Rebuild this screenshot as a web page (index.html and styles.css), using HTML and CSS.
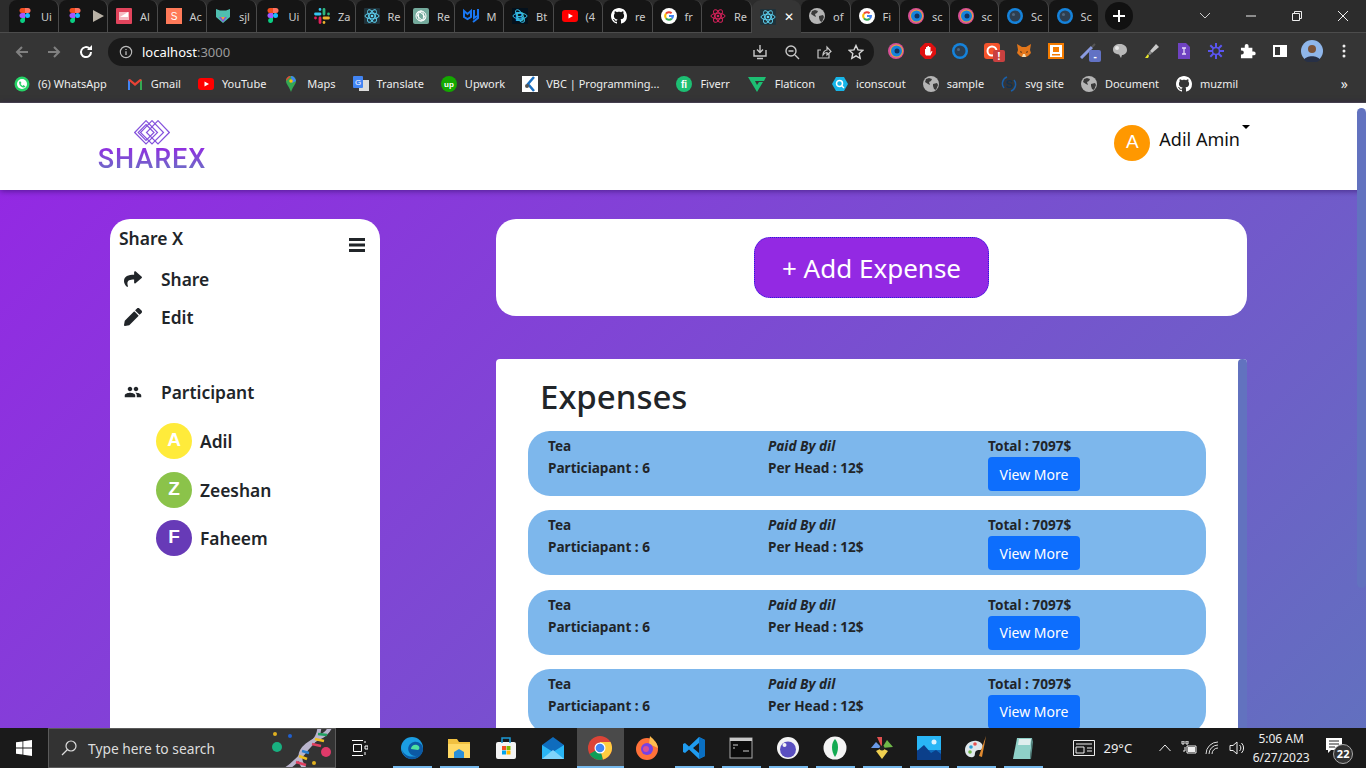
FILE: index.html
```html
<!DOCTYPE html>
<html>
<head>
  <title>Share X</title>
  <link rel="stylesheet" href="styles.css">
</head>
<body>
  <!-- shared icons -->
  <svg class="defs">
    <symbol id="figma" viewBox="0 0 16 16"><path fill="#f24e1e" d="M5 0h3v5H5a2.5 2.5 0 0 1 0-5z"/><path fill="#ff7262" d="M8 0h3a2.5 2.5 0 0 1 0 5H8z"/><path fill="#a259ff" d="M5 5h3v5H5a2.5 2.5 0 0 1 0-5z"/><circle fill="#1abcfe" cx="10.5" cy="7.5" r="2.5"/><path fill="#0acf83" d="M5 10h3v3a2.5 2.5 0 1 1-3-3z"/></symbol>
    <symbol id="react" viewBox="0 0 16 16"><rect width="16" height="16" rx="1" fill="#20323a"/><g fill="none" stroke="#61dafb" stroke-width=".9"><ellipse cx="8" cy="8" rx="7" ry="2.8"/><ellipse cx="8" cy="8" rx="7" ry="2.8" transform="rotate(60 8 8)"/><ellipse cx="8" cy="8" rx="7" ry="2.8" transform="rotate(120 8 8)"/></g><circle cx="8" cy="8" r="1.3" fill="#61dafb"/></symbol>
    <symbol id="reactred" viewBox="0 0 16 16"><g fill="none" stroke="#d6215b" stroke-width="1"><ellipse cx="8" cy="8" rx="7" ry="2.8"/><ellipse cx="8" cy="8" rx="7" ry="2.8" transform="rotate(60 8 8)"/><ellipse cx="8" cy="8" rx="7" ry="2.8" transform="rotate(120 8 8)"/></g><circle cx="8" cy="8" r="1.3" fill="#d6215b"/></symbol>
    <symbol id="google" viewBox="0 0 16 16"><circle cx="8" cy="8" r="8" fill="#fff"/><path d="M5 5.7A3.8 3.8 0 0 1 10.6 5.2" fill="none" stroke="#ea4335" stroke-width="2"/><path d="M5 10.3A3.8 3.8 0 0 1 5 5.7" fill="none" stroke="#fbbc05" stroke-width="2"/><path d="M10.8 10.5A3.8 3.8 0 0 1 5 10.3" fill="none" stroke="#34a853" stroke-width="2"/><path d="M8 8h4a3.8 3.8 0 0 1-1.200 2.500" fill="none" stroke="#4285f4" stroke-width="2"/></symbol>
    <symbol id="github" viewBox="0 0 16 16"><path fill="#fff" d="M8 0C3.58 0 0 3.58 0 8c0 3.54 2.29 6.53 5.47 7.59.4.07.55-.17.55-.38 0-.19-.01-.82-.01-1.49-2.01.37-2.53-.49-2.69-.94-.09-.23-.48-.94-.82-1.13-.28-.15-.68-.52-.01-.53.63-.01 1.08.58 1.23.82.72 1.21 1.87.87 2.33.66.07-.52.28-.87.51-1.07-1.78-.2-3.64-.89-3.64-3.95 0-.87.31-1.59.82-2.15-.08-.2-.36-1.02.08-2.12 0 0 .67-.21 2.2.82.64-.18 1.32-.27 2-.27s1.36.09 2 .27c1.53-1.04 2.2-.82 2.2-.82.44 1.1.16 1.92.08 2.12.51.56.82 1.27.82 2.15 0 3.07-1.87 3.75-3.65 3.95.29.25.54.73.54 1.48 0 1.07-.01 1.93-.01 2.2 0 .21.15.46.55.38A8.013 8.013 0 0 0 16 8c0-4.42-3.58-8-8-8z"/></symbol>
    <symbol id="youtube" viewBox="0 0 16 16"><rect y="2" width="16" height="12" rx="3" fill="#f00"/><path d="M6.5 5.5v5L11 8z" fill="#fff"/></symbol>
    <symbol id="globe" viewBox="0 0 16 16"><circle cx="8" cy="8" r="8" fill="#b5b5b5"/><path fill="#3a3a3a" d="M3 3l3-1 3 1-1 2-2 1 1 3-2-1-3-2zM10 8l4-1 1 2-2 5-2-1-1-3z"/></symbol>
    <symbol id="fox" viewBox="0 0 16 16"><circle cx="8" cy="8" r="8" fill="#d84f96"/><circle cx="8.5" cy="8" r="6.5" fill="#f2a33a"/><circle cx="8.5" cy="8" r="5.5" fill="#1583dc"/><circle cx="9" cy="8" r="2.5" fill="#12325e"/></symbol>
    <symbol id="scout" viewBox="0 0 16 16"><circle cx="8" cy="8" r="8" fill="#1583dc"/><circle cx="8" cy="8" r="5.5" fill="#2d3e50"/><circle cx="6.5" cy="6.5" r="1.5" fill="#50677d"/></symbol>
    <symbol id="shield" viewBox="0 0 16 16"><path fill="#4fbfb0" d="M1 1l4 1.5h6L15 1v8l-7 6-7-6z"/><path fill="#8a4fd8" d="M4 9h8l-4 5z"/><path fill="#e9a93a" d="M6 9h4l-2 3z"/></symbol>
    <symbol id="slack" viewBox="0 0 16 16"><g fill="none" stroke-width="2.8" stroke-linecap="round"><path stroke="#36c5f0" d="M6 1.500v0M1.500 6H6"/><path stroke="#2eb67d" d="M14.500 6v0M10 1.500V6"/><path stroke="#ecb22e" d="M10 14.500v0M10 10h4.500"/><path stroke="#e01e5a" d="M1.500 10v0M6 10v4.500"/></g></symbol>
    <symbol id="gpt" viewBox="0 0 16 16"><rect width="16" height="16" rx="2" fill="#74aa9c"/><g fill="none" stroke="#fff" stroke-width="1"><circle cx="8" cy="8" r="5"/><ellipse cx="8" cy="8" rx="2.5" ry="5"/><ellipse cx="8" cy="8" rx="5" ry="2.5" transform="rotate(45 8 8)"/></g></symbol>
    <symbol id="mui" viewBox="0 0 16 16"><path fill="none" stroke="#1976f0" stroke-width="2" d="M1 3v6l3.500 2L8 9V3L4.500 6zM11 2v8l3-2M15 1v9l-5 4"/></symbol>
    <symbol id="bs" viewBox="0 0 16 16"><rect width="16" height="16" fill="#04111c"/><g fill="none" stroke="#35b8e0"><ellipse cx="8" cy="8" rx="7" ry="2.8"/><ellipse cx="8" cy="8" rx="7" ry="2.8" transform="rotate(60 8 8)"/></g><text x="8" y="13" font-size="13" font-weight="700" text-anchor="middle" fill="#35b8e0" font-family="Liberation Sans">B</text></symbol>
  </svg>

  <div class="browser">
    <div class="tabstrip">
      <div class="tab"><svg class="fav"><use href="#figma"/></svg><span class="tab-name">Ui</span></div>
      <div class="tab"><svg class="fav"><use href="#figma"/></svg><svg class="fav" viewBox="0 0 16 16"><path d="M2 2v12l11-6z" fill="#b9b2a6"/></svg></div>
      <div class="tab"><svg class="fav" viewBox="0 0 16 16"><rect width="16" height="16" rx="1" fill="#e2445c"/><path d="M3 4h10v8H3z" fill="#f6b9c2"/><path d="M4 9l8-5v5z" fill="#fff"/></svg><span class="tab-name">Al</span></div>
      <div class="tab"><svg class="fav" viewBox="0 0 16 16"><rect width="16" height="16" fill="#ff7a59"/><text x="8" y="12" font-size="10" text-anchor="middle" fill="#fff" font-family="Liberation Sans">S</text></svg><span class="tab-name">Ac</span></div>
      <div class="tab"><svg class="fav"><use href="#shield"/></svg><span class="tab-name">sjl</span></div>
      <div class="tab"><svg class="fav"><use href="#figma"/></svg><span class="tab-name">Ui</span></div>
      <div class="tab"><svg class="fav"><use href="#slack"/></svg><span class="tab-name">Za</span></div>
      <div class="tab"><svg class="fav"><use href="#react"/></svg><span class="tab-name">Re</span></div>
      <div class="tab"><svg class="fav"><use href="#gpt"/></svg><span class="tab-name">Re</span></div>
      <div class="tab"><svg class="fav"><use href="#mui"/></svg><span class="tab-name">M</span></div>
      <div class="tab"><svg class="fav"><use href="#bs"/></svg><span class="tab-name">Bt</span></div>
      <div class="tab"><svg class="fav"><use href="#youtube"/></svg><span class="tab-name">(4</span></div>
      <div class="tab"><svg class="fav"><use href="#github"/></svg><span class="tab-name">re</span></div>
      <div class="tab"><svg class="fav"><use href="#google"/></svg><span class="tab-name">fr</span></div>
      <div class="tab"><svg class="fav"><use href="#reactred"/></svg><span class="tab-name">Re</span></div>
      <div class="tab tab-active"><svg class="fav"><use href="#react"/></svg><span class="tab-close">✕</span></div>
      <div class="tab"><svg class="fav"><use href="#globe"/></svg><span class="tab-name">of</span></div>
      <div class="tab"><svg class="fav"><use href="#google"/></svg><span class="tab-name">Fi</span></div>
      <div class="tab"><svg class="fav"><use href="#fox"/></svg><span class="tab-name">sc</span></div>
      <div class="tab"><svg class="fav"><use href="#fox"/></svg><span class="tab-name">sc</span></div>
      <div class="tab"><svg class="fav"><use href="#scout"/></svg><span class="tab-name">Sc</span></div>
      <div class="tab"><svg class="fav"><use href="#scout"/></svg><span class="tab-name">Sc</span></div>
      <div class="newtab">
        <svg width="14" height="14" viewBox="0 0 14 14"><path d="M7 1v12M1 7h12" stroke="#fff" stroke-width="2"/></svg>
      </div>
      <div class="winctl">
        <svg width="46" height="16" viewBox="0 0 46 16"><path d="M18 5l5 5 5-5" fill="none" stroke="#ccc"/></svg>
        <svg width="46" height="16" viewBox="0 0 46 16"><path d="M18 8h10" stroke="#eee"/></svg>
        <svg width="46" height="16" viewBox="0 0 46 16"><path d="M18.5 5.500h7v7h-7zM20.500 5V3.500h7v7H26" fill="none" stroke="#eee"/></svg>
        <svg width="46" height="16" viewBox="0 0 46 16"><path d="M18 3l10 10M28 3L18 13" stroke="#eee"/></svg>
      </div>
    </div>

    <div class="toolbar">
      <svg class="navbtn" viewBox="0 0 16 16"><path d="M14 8H3M8 3L3 8l5 5" fill="none" stroke="#808080" stroke-width="2"/></svg>
      <svg class="navbtn" viewBox="0 0 16 16"><path d="M2 8h11M8 3l5 5-5 5" fill="none" stroke="#808080" stroke-width="2"/></svg>
      <svg class="navbtn" viewBox="0 0 16 16"><path d="M13 8a5 5 0 1 1-1.500-3.500" fill="none" stroke="#fff" stroke-width="2"/><path d="M14 1v5H9z" fill="#fff"/></svg>
      <div class="omnibox">
        <svg class="omni-info" viewBox="0 0 16 16"><circle cx="8" cy="8" r="6.5" fill="none" stroke="#bbb" stroke-width="1.3"/><path d="M8 7v4.500M8 4.500v1.300" stroke="#bbb" stroke-width="1.5"/></svg>
        <span class="url">localhost<span class="url-port">:3000</span></span>
        <div class="omni-tools">
          <svg class="omni-ico" viewBox="0 0 16 16"><path d="M8 1v7M5 5.500L8 8.500l3-3M2 6v6h12V6M5 14.500h6" fill="none" stroke="#c8c8c8" stroke-width="1.4"/></svg>
          <svg class="omni-ico" viewBox="0 0 16 16"><circle cx="7" cy="7" r="5" fill="none" stroke="#c8c8c8" stroke-width="1.4"/><path d="M4.500 7h5M11 11l4 4" stroke="#c8c8c8" stroke-width="1.4"/></svg>
          <svg class="omni-ico" viewBox="0 0 16 16"><path d="M13 9v5H2V6h3M7 11c0-3 2-5 4-5V3l4 4.500L11 11V8.500c-2 0-3 1-4 2.500z" fill="none" stroke="#c8c8c8" stroke-width="1.2"/></svg>
          <svg class="omni-ico" viewBox="0 0 16 16"><path d="M8 1.500l2 4.400 4.800.5-3.600 3.200 1 4.700L8 11.900l-4.200 2.400 1-4.700L1.200 6.400 6 5.900z" fill="none" stroke="#d8d8d8" stroke-width="1.4"/></svg>
        </div>
      </div>
      <div class="extensions">
        <svg class="ext" viewBox="0 0 16 16"><use href="#fox"/></svg>
        <svg class="ext" viewBox="0 0 16 16"><path d="M5 0h6l5 5v6l-5 5H5l-5-5V5z" fill="#e01010"/><path d="M5 11V6h1v2-4h1.500v4-5H9v5-4h1.500v6l1-2 1 .5-2 4H6z" fill="#fff"/></svg>
        <svg class="ext" viewBox="0 0 16 16"><use href="#scout"/></svg>
        <div class="ext-wrap">
          <svg class="ext" viewBox="0 0 16 16"><rect width="16" height="16" rx="3" fill="#f4532c"/><circle cx="8" cy="8" r="4.5" fill="none" stroke="#fff" stroke-width="2"/></svg>
          <span class="ext-badge ext-badge-red">!</span>
        </div>
        <svg class="ext" viewBox="0 0 16 16"><path d="M1 1l5 3h4l5-3-1 6 1 3-3 3-2 1H6l-2-1-3-3 1-3z" fill="#e2761b"/><path d="M6 14l1-3h2l1 3z" fill="#f5deb3"/><path d="M4 8l2 1-1 1zM12 8l-2 1 1 1z" fill="#222"/></svg>
        <svg class="ext" viewBox="0 0 16 16"><rect width="16" height="16" fill="#f57c00"/><rect x="2" y="2" width="12" height="12" fill="#fff"/><path d="M4 11h8v1.500H4zM5 4h6v5H5z" fill="#f57c00"/></svg>
        <div class="ext-wrap">
          <svg class="ext" viewBox="0 0 16 16"><path d="M1 15L12 4" stroke="#8a9be0" stroke-width="3"/><path d="M12 4l3-3" stroke="#555" stroke-width="2"/></svg>
          <span class="ext-badge ext-badge-blue">-</span>
        </div>
        <svg class="ext" viewBox="0 0 16 16"><path d="M8 1c4 0 7 2.500 7 6s-3 5-5 5l-1 3-2-3.500C4 11 1 10 1 6.500S4 1 8 1z" fill="#b9b9b9"/><circle cx="5" cy="5" r="2" fill="#e8e8e8"/></svg>
        <svg class="ext" viewBox="0 0 16 16"><path d="M6 8l6-7 3 3-7 6z" fill="#c9c9c9"/><path d="M6 8l2 2-2 2-2-1z" fill="#8a8a8a"/><path d="M1 15l3-4 1 2-1 2z" fill="#e8e82a"/></svg>
        <svg class="ext" viewBox="0 0 16 16"><path d="M2 0h8l4 4v12H2z" fill="#6f42c1"/><path d="M6 5h4M8 5v6M6 11h4" stroke="#e6dcf7" stroke-width="1.3"/></svg>
        <svg class="ext" viewBox="0 0 16 16"><g stroke="#5a55f0" stroke-width="2"><path d="M8 0v16M0 8h16M2.300 2.300l11.400 11.400M13.700 2.300L2.300 13.700"/></g><circle cx="8" cy="8" r="3.5" fill="#353535" stroke="#5a55f0" stroke-width="1.5"/></svg>
        <svg class="ext" viewBox="0 0 16 16"><path d="M1 5h4V3a2 2 0 1 1 4 0v2h4v4h1.500a2 2 0 1 1 0 4H13v3H1v-4h1a2 2 0 1 0 0-4H1z" fill="#fff" transform="scale(.95)"/></svg>
        <svg class="ext" viewBox="0 0 16 16"><path d="M1 2h14v12H1zM3 4v8h5V4z" fill="#fff" fill-rule="evenodd"/></svg>
        <svg class="ext ext-avatar" viewBox="0 0 22 22"><circle cx="11" cy="11" r="11" fill="#8fb6ea"/><circle cx="11" cy="9" r="4" fill="#7a5238"/><path d="M3 20c2-5 14-5 16 0l-3 2H6z" fill="#273046"/></svg>
        <svg class="ext" viewBox="0 0 16 16"><g fill="#eee"><circle cx="8" cy="3" r="1.500"/><circle cx="8" cy="8" r="1.500"/><circle cx="8" cy="13" r="1.500"/></g></svg>
      </div>
    </div>

    <div class="bookmarks">
      <div class="bm"><svg class="fav" viewBox="0 0 16 16"><circle cx="8" cy="8" r="7.5" fill="#25d366"/><circle cx="8" cy="8" r="5" fill="#fff"/><path d="M6 5l1.500 2-1 1 2 2 1-1 2 1.500c-1 2-6 1-6.500-4z" fill="#25d366"/></svg>(6) WhatsApp</div>
      <div class="bm"><svg class="fav" viewBox="0 0 16 16"><path d="M1 14V4l2-1v11z" fill="#4285f4"/><path d="M15 14V4l-2-1v11z" fill="#34a853"/><path d="M1 4l2-1 5 4 5-4 2 1-7 6z" fill="#ea4335"/></svg>Gmail</div>
      <div class="bm"><svg class="fav"><use href="#youtube"/></svg>YouTube</div>
      <div class="bm"><svg class="fav" viewBox="0 0 16 16"><path d="M8 0c3 0 5 2.200 5 5 0 3-3 5-5 11C6 10 3 8 3 5c0-2.800 2-5 5-5z" fill="#34a853"/><path d="M8 0c1.500 0 3.500.5 5 5L9 7z" fill="#4285f4"/><path d="M3 5c0-3 2-5 5-5L5 3z" fill="#ea4335"/><circle cx="8" cy="5" r="1.8" fill="#fbbc05"/></svg>Maps</div>
      <div class="bm"><svg class="fav" viewBox="0 0 16 16"><rect x="6" y="4" width="10" height="11" fill="#dcdcdc"/><rect width="10" height="12" rx="1" fill="#4285f4"/><text x="5" y="9" font-size="8" text-anchor="middle" fill="#fff" font-family="Liberation Sans">G</text></svg>Translate</div>
      <div class="bm"><svg class="fav" viewBox="0 0 16 16"><circle cx="8" cy="8" r="8" fill="#14a800"/><text x="8" y="11" font-size="8" font-weight="700" text-anchor="middle" fill="#fff" font-family="Liberation Sans">up</text></svg>Upwork</div>
      <div class="bm"><svg class="fav" viewBox="0 0 16 16"><rect width="16" height="16" fill="#fff"/><path d="M12 1L6 8l6 7" fill="none" stroke="#1a6fc0" stroke-width="2.5"/><circle cx="5" cy="10" r="2" fill="#555"/></svg>VBC | Programming...</div>
      <div class="bm"><svg class="fav" viewBox="0 0 16 16"><circle cx="8" cy="8" r="8" fill="#1dbf73"/><text x="8" y="12" font-size="10" font-weight="700" text-anchor="middle" fill="#fff" font-family="Liberation Sans">fi</text></svg>Fiverr</div>
      <div class="bm"><svg class="fav-wide" viewBox="0 0 20 16"><path d="M1 1h18l-2 4H8l2 4 2-3h4l-6 10z" fill="#1dbf73"/></svg>Flaticon</div>
      <div class="bm"><svg class="fav" viewBox="0 0 16 16"><path d="M4 1h8l4 7-4 7H4L0 8z" fill="#17b5e8"/><circle cx="7.5" cy="7.5" r="3" fill="none" stroke="#fff" stroke-width="1.5"/><path d="M10 10l2 2" stroke="#fff" stroke-width="1.5"/></svg>iconscout</div>
      <div class="bm"><svg class="fav"><use href="#globe"/></svg>sample</div>
      <div class="bm"><svg class="fav" viewBox="0 0 16 16"><path d="M3 12A7 7 0 0 1 6 1M13 4a7 7 0 0 1-3 11" fill="none" stroke="#1a5fa8" stroke-width="1.5"/><text x="8" y="12" font-size="11" font-weight="700" text-anchor="middle" fill="#14314f" font-family="Liberation Sans">S</text></svg>svg site</div>
      <div class="bm"><svg class="fav"><use href="#globe"/></svg>Document</div>
      <div class="bm"><svg class="fav"><use href="#github"/></svg>muzmil</div>
      <span class="bm-more">»</span>
    </div>

    <div class="page">
      <nav class="topnav">
        <div class="logo">
          <svg class="logo-mark" width="36" height="25" viewBox="0 0 36 25"><g fill="none" stroke="#8552dc" stroke-width="1.2"><path d="M12 .7L23.5 12.5 12 24 .7 12.5z"/><path d="M12 4.5L20 12.5 12 20.5 4.2 12.5z"/><path d="M18 .7L29.5 12.5 18 24 6.5 12.5z"/><path d="M24 .7L35.3 12.5 24 24 12.5 12.5z"/></g></svg>
          <span class="logo-text">SHAREX</span>
        </div>
        <div class="profile">
          <span class="avatar avatar-orange">A</span>
          <span class="profile-name">Adil Amin</span>
          <span class="caret"></span>
        </div>
      </nav>

      <main class="content">
        <aside class="sidebar">
          <div class="side-head">
            <h5>Share X</h5>
            <svg class="bars" viewBox="0 0 16 14"><path d="M0 0h16v3H0zM0 5.500h16v3H0zM0 11h16v3H0z" fill="#212529"/></svg>
          </div>
          <div class="side-link">
            <svg class="side-ico" viewBox="0 0 512 512"><path d="M503.691 189.836L327.687 37.851C312.281 24.546 288 35.347 288 56.015v80.053C127.371 137.907 0 170.1 0 322.326c0 61.441 39.581 122.309 83.333 154.132 13.653 9.931 33.111-2.533 28.077-18.631C66.066 312.814 132.917 274.316 288 272.085V360c0 20.7 24.3 31.453 39.687 18.164l176.004-152c11.071-9.562 11.086-26.753 0-36.328z"/></svg>
            Share
          </div>
          <div class="side-link">
            <svg class="side-ico" viewBox="0 0 512 512"><path d="M497.9 142.1l-46.1 46.1c-4.7 4.7-12.3 4.7-17 0l-111-111c-4.7-4.7-4.7-12.3 0-17l46.1-46.1c18.7-18.7 49.1-18.7 67.9 0l60.1 60.1c18.8 18.7 18.8 49.1 0 67.9zM284.2 99.8L21.6 362.4.4 483.9c-2.9 16.4 11.4 30.6 27.8 27.8l121.5-21.3 262.6-262.6c4.7-4.7 4.7-12.3 0-17l-111-111c-4.8-4.7-12.4-4.7-17.1 0z"/></svg>
            Edit
          </div>
          <div class="side-link side-participant">
            <svg class="side-ico" viewBox="0 0 24 24"><path d="M16 11c1.660 0 2.990-1.340 2.990-3S17.660 5 16 5s-3 1.340-3 3 1.340 3 3 3zm-8 0c1.660 0 2.990-1.340 2.990-3S9.660 5 8 5 5 6.340 5 8s1.340 3 3 3zm0 2c-2.330 0-7 1.170-7 3.500V19h14v-2.500c0-2.330-4.670-3.500-7-3.500zm8 0c-.29 0-.62.02-.97.05 1.160.84 1.970 1.970 1.970 3.450V19h6v-2.500c0-2.330-4.670-3.500-7-3.500z"/></svg>
            Participant
          </div>
          <div class="person"><span class="avatar avatar-yellow">A</span>Adil</div>
          <div class="person"><span class="avatar avatar-green">Z</span>Zeeshan</div>
          <div class="person"><span class="avatar avatar-purple">F</span>Faheem</div>
        </aside>

        <section class="main-col">
          <div class="add-card">
            <button class="add-btn">+ Add Expense</button>
          </div>
          <div class="expenses">
            <h1>Expenses</h1>
            <div class="exp-row">
              <div><div class="exp-line">Tea</div><div class="exp-line">Particiapant : 6</div></div>
              <div><div class="exp-line exp-paid">Paid By dil</div><div class="exp-line">Per Head : 12$</div></div>
              <div><div class="exp-line">Total : 7097$</div><button class="view-btn">View More</button></div>
            </div>
            <div class="exp-row">
              <div><div class="exp-line">Tea</div><div class="exp-line">Particiapant : 6</div></div>
              <div><div class="exp-line exp-paid">Paid By dil</div><div class="exp-line">Per Head : 12$</div></div>
              <div><div class="exp-line">Total : 7097$</div><button class="view-btn">View More</button></div>
            </div>
            <div class="exp-row">
              <div><div class="exp-line">Tea</div><div class="exp-line">Particiapant : 6</div></div>
              <div><div class="exp-line exp-paid">Paid By dil</div><div class="exp-line">Per Head : 12$</div></div>
              <div><div class="exp-line">Total : 7097$</div><button class="view-btn">View More</button></div>
            </div>
            <div class="exp-row">
              <div><div class="exp-line">Tea</div><div class="exp-line">Particiapant : 6</div></div>
              <div><div class="exp-line exp-paid">Paid By dil</div><div class="exp-line">Per Head : 12$</div></div>
              <div><div class="exp-line">Total : 7097$</div><button class="view-btn">View More</button></div>
            </div>
            <div class="inner-scroll"></div>
          </div>
        </section>
      </main>
      <div class="page-scroll"></div>
    </div>

    <div class="taskbar">
      <div class="start">
        <svg width="16" height="16" viewBox="0 0 16 16"><path d="M0 2.300l6.500-.9v6.200H0zM7.300 1.300L16 0v7.600H7.300zM0 8.400h6.500v6.200L0 13.700zM7.300 8.400H16V16l-8.700-1.300z" fill="#fff"/></svg>
      </div>
      <div class="search">
        <svg width="16" height="16" viewBox="0 0 16 16"><circle cx="10" cy="6" r="5" fill="none" stroke="#ddd" stroke-width="1.2"/><path d="M6.500 9.500L1 15" stroke="#ddd" stroke-width="1.2"/></svg>
        <span>Type here to search</span>
        <svg class="dna" width="66" height="40" viewBox="0 0 66 40"><g fill="none" stroke="#b9b4cc" stroke-width="4"><path d="M14 42C24 36 30 30 36 22S52 8 50-4"/><path d="M38 42C30 34 28 24 38 16S58 8 62-4"/></g><g stroke-width="2.5"><path d="M27 33l10 3" stroke="#e04060"/><path d="M30 27l8 3" stroke="#f0c020"/><path d="M33 22l7 2" stroke="#2a7fd0"/><path d="M43 15l9 2" stroke="#e04060"/><path d="M46 10l9 2" stroke="#f0c020"/><path d="M49 5l9 1" stroke="#20a060"/></g><circle cx="8" cy="18" r="5" fill="#18b080"/><circle cx="57" cy="23" r="5" fill="#e03a6a"/><circle cx="6" cy="5" r="2" fill="#e0b020"/><circle cx="21" cy="7" r="2" fill="#2060d0"/><circle cx="45" cy="34" r="2" fill="#e0b020"/></svg>
      </div>
      <div class="task-view">
        <svg width="16" height="16" viewBox="0 0 16 16"><path d="M0 .5h11M1.500 4.500h8v7h-8zM0 15.500h11M13 1v2M13 6h3v3h-3zM13 12v3" fill="none" stroke="#fff"/></svg>
      </div>
      <div class="task-apps">
        <div class="app app-open"><svg viewBox="0 0 24 24" class="app-ico"><circle cx="12" cy="12" r="11" fill="#1b9de2"/><path d="M23 13c0-5-5-8-9-7-5 1-7 6-5 10s7 5 10 3c-6 3-14 2-17-5C3 20 8 24 14 23c5-1 9-5 9-10z" fill="#0c59a4"/><path d="M11 13c0-3 3-5 6-4 3 1 3 4 1 5z" fill="#4ee0a0"/></svg></div>
        <div class="app app-open"><svg viewBox="0 0 24 24" class="app-ico"><path d="M1 3h9l2 3h11v16H1z" fill="#f0c040"/><path d="M1 8h22v14H1z" fill="#ffd965"/><path d="M7 22v-6l5-3 5 3v6z" fill="#2a8fd8"/></svg></div>
        <div class="app"><svg viewBox="0 0 24 24" class="app-ico"><rect x="2" y="6" width="20" height="17" rx="2" fill="#f4f4f4"/><path d="M8 7V2h8v5" fill="none" stroke="#1c9ad6" stroke-width="1.5"/><path d="M8 10h4v4H8z" fill="#f25022"/><path d="M12.500 10h4v4h-4z" fill="#7fba00"/><path d="M8 14.500h4v4H8z" fill="#00a4ef"/><path d="M12.500 14.500h4v4h-4z" fill="#ffb900"/></svg></div>
        <div class="app"><svg viewBox="0 0 24 24" class="app-ico"><path d="M12 1l11 8v14H1V9z" fill="#0f6cbd"/><path d="M1 9l11 7 11-7v14H1z" fill="#29b6f6"/><path d="M1 23l11-9 11 9z" fill="#7fd4fb"/></svg></div>
        <div class="app app-active"><svg viewBox="0 0 24 24" class="app-ico"><circle cx="12" cy="12" r="12" fill="#db4437"/><path d="M12 12L1.500 18A12 12 0 0 0 15 23.500z" fill="#0f9d58"/><path d="M12 6h10.500A12 12 0 0 1 15 23.500L12 12z" fill="#ffcd40"/><circle cx="12" cy="12" r="5.5" fill="#fff"/><circle cx="12" cy="12" r="4.3" fill="#4285f4"/></svg></div>
        <div class="app"><svg viewBox="0 0 24 24" class="app-ico"><circle cx="12" cy="13" r="11" fill="#ff7139"/><path d="M15 0c3 3 7 6 8 12L14 8z" fill="#ffbd4f"/><circle cx="12" cy="13" r="6" fill="#7542e5"/><circle cx="11" cy="13" r="3" fill="#d84f96"/></svg></div>
        <div class="app app-open"><svg viewBox="0 0 24 24" class="app-ico"><path d="M17 1l6 3v16l-6 3L7 13.500 3 17l-2-1V8l2-1 4 3.500zM17 7l-6 5 6 5z" fill="#1f9cf0"/><path d="M17 1l6 3v16l-6 3z" fill="#0a6fc2"/></svg></div>
        <div class="app app-open"><svg viewBox="0 0 24 24" class="app-ico"><rect x="1" y="2" width="22" height="20" fill="#0c0c0c" stroke="#aaa"/><rect x="1" y="2" width="22" height="3" fill="#c8c8c8"/><path d="M4 9h5M4 12h2M14 15h6" stroke="#ccc"/></svg></div>
        <div class="app app-open"><svg viewBox="0 0 24 24" class="app-ico"><circle cx="12" cy="12" r="11" fill="#f4f4f4"/><circle cx="12" cy="13.5" r="8" fill="#5a4fc0"/><circle cx="8.5" cy="9" r="2" fill="#f4f4f4"/></svg></div>
        <div class="app app-open"><svg viewBox="0 0 24 24" class="app-ico"><circle cx="12" cy="12" r="11.5" fill="#f4f4f4"/><path d="M12 3c4 4 4 12 0 18-4-6-4-14 0-18z" fill="#13aa52"/></svg></div>
        <div class="app app-open"><svg viewBox="0 0 24 24" class="app-ico"><path d="M12 12L7 1h5z" fill="#e05050"/><path d="M12 12l-11 0 5-6z" fill="#6a9ae8"/><path d="M12 12l5-8 6 7z" fill="#70b84a"/><path d="M12 12l-6 3 6 8 6-8z" fill="#f0d050"/><circle cx="12" cy="12" r="2.5" fill="#222"/></svg></div>
        <div class="app app-open"><svg viewBox="0 0 24 24" class="app-ico"><rect width="24" height="24" fill="#0f6cbd"/><rect width="24" height="14" fill="#29b6f6"/><path d="M0 24V15l7-6 7 8 5-3 5 4v6z" fill="#0b3f8a"/><circle cx="17" cy="6" r="2.5" fill="#dff3ff"/></svg></div>
        <div class="app app-open"><svg viewBox="0 0 24 24" class="app-ico"><path d="M1 14c0-6 6-10 12-9 5 1 7 5 5 8-2 2-4 0-6 2s0 5-3 6c-4 1-8-2-8-7z" fill="#dfe7ec"/><circle cx="7" cy="11" r="1.8" fill="#2a9fd8"/><circle cx="11" cy="8" r="1.8" fill="#e85050"/><circle cx="6" cy="16" r="1.8" fill="#70b84a"/><path d="M22 0l-7 20 3 1z" fill="#e08a30"/></svg></div>
        <div class="app app-open"><svg viewBox="0 0 24 24" class="app-ico"><path d="M6 2h15l-2 21H2z" fill="#8fd0c8"/><path d="M8 3h12l-1 6H7z" fill="#dfeeee"/><path d="M21 2l1 4-2 17h-1z" fill="#5a8f8a"/></svg></div>
      </div>
      <div class="tray">
        <svg width="22" height="18" viewBox="0 0 22 18"><path d="M.5 1.500h21v15H.5z" fill="none" stroke="#eee"/><path d="M3 5h16M3 8h8v6H3zM14 9h5M14 12h5" fill="none" stroke="#eee"/></svg>
        <span class="temp">29°C</span>
        <svg class="tray-up" width="12" height="8" viewBox="0 0 12 8"><path d="M.5 7L6 1l5.500 6" fill="none" stroke="#eee"/></svg>
        <svg class="tray-ico" width="16" height="14" viewBox="0 0 16 14"><path d="M1 0h2v3H1zM5 0h2v3H5zM4 6v4M4 10H2M6 5h9v7H6z" fill="none" stroke="#eee"/><path d="M7 6h7v5H7z" fill="#eee"/></svg>
        <svg class="tray-ico" width="16" height="14" viewBox="0 0 16 14"><path d="M1 13A12 12 0 0 1 13 1M4 13a9 9 0 0 1 9-9M7 13a6 6 0 0 1 6-6" fill="none" stroke="#ddd"/></svg>
        <svg class="tray-ico" width="16" height="14" viewBox="0 0 16 14"><path d="M1 4.500h3L8 1v12L4 9.500H1zM10.500 4a4 4 0 0 1 0 6M12.500 2a7 7 0 0 1 0 10" fill="none" stroke="#eee"/></svg>
        <div class="clock"><div>5:06 AM</div><div>6/27/2023</div></div>
        <div class="notif">
          <svg width="16" height="16" viewBox="0 0 16 16"><path d="M0 0h16v12H5l-3 3v-3H0z" fill="#fff"/><path d="M3 3h10M3 6h10M3 9h6" stroke="#222"/></svg>
          <span class="notif-count">22</span>
        </div>
      </div>
    </div>
  </div>
</body>
</html>
```

FILE: styles.css
```css
* {
  box-sizing: border-box;
}
html, body {
  margin: 0;
  padding: 0;
  overflow: hidden;
}
body {
  font-family: "Noto Sans", sans-serif;
  background: #1a1a1a;
}
button {
  font-family: inherit;
}
h1, h5 {
  margin: 0;
}
.defs {
  position: absolute;
  width: 0;
  height: 0;
}
.browser {
  display: flex;
  flex-direction: column;
  width: 1366px;
  height: 768px;
  overflow: hidden;
}

/* tab strip */
.tabstrip {
  display: flex;
  align-items: flex-end;
  height: 33px;
  padding-left: 9px;
  background: #2c2c2c;
  border-bottom: 1px solid #4c4c4c;
  color: #ccc;
  flex: none;
}
.tab {
  display: flex;
  align-items: center;
  gap: 8px;
  width: 49.5px;
  height: 32px;
  padding: 0 7px 0 8px;
  background: #151515;
  border-right: 1px solid #4a4a4a;
  border-radius: 8px 8px 0 0;
  overflow: hidden;
  flex: none;
}
.tab:nth-child(22) {
  border-right: 0;
}
.tab-active {
  height: 33px;
  margin-bottom: -1px;
  background: #353535;
  border-right: 0;
  border-radius: 9px 9px 0 0;
}
.tab-name {
  font-size: 11px;
  white-space: nowrap;
}
.tab-close {
  color: #fff;
  font-size: 12px;
}
.fav {
  width: 16px;
  height: 16px;
  flex: none;
}
.fav-wide {
  width: 20px;
  height: 16px;
  flex: none;
}
.newtab {
  display: flex;
  align-items: center;
  justify-content: center;
  width: 28px;
  height: 28px;
  margin: 0 0 2px 7px;
  border-radius: 50%;
  background: #111;
  flex: none;
}
.winctl {
  display: flex;
  align-self: center;
  margin-left: auto;
}

/* toolbar */
.toolbar {
  display: flex;
  align-items: center;
  height: 33px;
  padding: 5px 0 0 14px;
  background: #353535;
  flex: none;
}
.navbtn {
  width: 16px;
  height: 16px;
  margin-right: 16px;
  flex: none;
}
.omnibox {
  display: flex;
  align-items: center;
  width: 766px;
  height: 28px;
  margin-left: -2px;
  padding: 0 10px 0 11px;
  border-radius: 14px;
  background: #1a1a1a;
  flex: none;
}
.omni-info {
  width: 14px;
  height: 14px;
  margin-right: 9px;
}
.url {
  color: #fff;
  font-size: 13px;
}
.url-port {
  color: #9a9a9a;
}
.omni-tools {
  display: flex;
  gap: 16px;
  margin-left: auto;
}
.omni-ico {
  width: 16px;
  height: 16px;
}
.extensions {
  display: flex;
  margin-left: 6px;
}
.ext {
  display: block;
  width: 32px;
  height: 16px;
}
.ext-avatar {
  height: 22px;
  margin-top: -3px;
}
.ext-wrap {
  position: relative;
}
.ext-badge {
  position: absolute;
  left: 17px;
  top: 7px;
  width: 12px;
  height: 12px;
  border-radius: 2px;
  color: #fff;
  font-size: 10px;
  font-weight: 700;
  line-height: 12px;
  text-align: center;
}
.ext-badge-red {
  background: #c9403f;
}
.ext-badge-blue {
  background: #6272c4;
}

/* bookmarks */
.bookmarks {
  display: flex;
  align-items: center;
  gap: 17px;
  height: 37px;
  padding: 0 0 1px 14px;
  background: #353535;
  border-bottom: 1px solid #4c4c4c;
  color: #eee;
  font-size: 11px;
  white-space: nowrap;
  flex: none;
}
.bm {
  display: flex;
  align-items: center;
  gap: 8px;
}
.bm:first-child {
  margin-right: 3px;
}
.bm-more {
  margin-left: auto;
  margin-right: 18px;
  font-size: 14px;
}

/* app */
.page {
  position: relative;
  display: flex;
  flex-direction: column;
  flex: 1;
  min-height: 0;
  background: #fff;
}
.topnav {
  position: relative;
  z-index: 2;
  display: flex;
  height: 87px;
  padding: 17px 116px 0 99px;
  justify-content: space-between;
  align-items: flex-start;
  background: #fff;
  box-shadow: 0 1px 6px rgba(40, 10, 90, .6);
  flex: none;
}
.logo {
  display: flex;
  flex-direction: column;
  align-items: center;
  width: 106px;
}
.logo-text {
  margin-top: 1px;
  font-family: Roboto, sans-serif;
  font-size: 27px;
  font-weight: 500;
  line-height: 26px;
  letter-spacing: .9px;
  white-space: nowrap;
  background: linear-gradient(#9329e3, #6a72c4);
  -webkit-background-clip: text;
  background-clip: text;
  color: transparent;
}
.profile {
  position: relative;
  display: flex;
  align-items: center;
  gap: 9px;
  margin-top: 5px;
  padding-right: 10px;
}
.profile-name {
  margin-top: -8px;
  color: #111;
  font-size: 18px;
}
.caret {
  position: absolute;
  right: 0;
  top: 0;
  border: 4px solid transparent;
  border-top-color: #000;
  border-bottom: 0;
}
.avatar {
  display: flex;
  align-items: center;
  justify-content: center;
  width: 36px;
  height: 36px;
  padding-bottom: 2px;
  border-radius: 50%;
  color: #fff;
  font-family: "Liberation Sans", sans-serif;
  font-size: 19px;
  flex: none;
}
.avatar-orange {
  background: #ff9800;
}
.avatar-yellow {
  background: #ffeb3b;
  font-weight: 700;
}
.avatar-green {
  background: #8bc34a;
  font-weight: 700;
}
.avatar-purple {
  background: #673ab7;
  font-weight: 700;
}
.content {
  display: flex;
  flex: 1;
  min-height: 0;
  padding: 29px 0 0 110px;
  gap: 116px;
  overflow: hidden;
  background: linear-gradient(135deg, #9329e3 0%, #6270bf 100%);
}
.sidebar {
  width: 270px;
  height: 640px;
  padding: 7px 15px 0 9px;
  border-radius: 20px 20px 0 0;
  background: #fff;
  color: #212529;
  flex: none;
}
.side-head {
  display: flex;
  justify-content: space-between;
  height: 25px;
}
.side-head h5 {
  font-size: 17.5px;
  font-weight: 600;
  line-height: 24px;
}
.bars {
  width: 16px;
  height: 14px;
  margin-top: 12px;
}
.side-link {
  display: flex;
  align-items: center;
  height: 38px;
  margin-left: 5px;
  font-size: 17.4px;
  font-weight: 600;
}
.side-head + .side-link {
  margin-top: 9px;
}
.side-ico {
  width: 18px;
  height: 18px;
  margin-right: 19px;
  fill: #212529;
  flex: none;
}
.side-participant {
  margin-top: 37px;
}
.person {
  display: flex;
  align-items: center;
  gap: 8px;
  height: 36px;
  margin: 12.5px 0 0 37px;
  font-size: 17.4px;
  font-weight: 600;
  color: #212529;
}
.side-participant + .person {
  margin-top: 12px;
}
.main-col {
  display: flex;
  flex-direction: column;
  gap: 43px;
  width: 751px;
  flex: none;
}
.add-card {
  display: flex;
  justify-content: center;
  align-items: flex-start;
  height: 97px;
  padding-top: 18px;
  border-radius: 20px;
  background: #fff;
  flex: none;
}
.add-btn {
  width: 235px;
  height: 61px;
  border: 1px dotted #2a1be0;
  border-radius: 16px;
  background: #9329e3;
  color: #fff;
  font-size: 26px;
}
.expenses {
  position: relative;
  height: 500px;
  padding: 15px 41px 0 32px;
  border-radius: 4px;
  background: #fff;
  color: #212529;
  flex: none;
}
.expenses h1 {
  margin: 0 0 12px 12px;
  font-size: 33px;
  font-weight: 500;
  line-height: 45px;
}
.exp-row {
  display: grid;
  grid-template-columns: 220px 220px 1fr;
  height: 65px;
  margin-bottom: 14.3px;
  padding: 4px 0 0 20px;
  border-radius: 22px;
  background: #7db7ec;
  font-size: 13.6px;
  font-weight: 700;
}
.exp-line {
  height: 22px;
  line-height: 22px;
}
.exp-paid {
  font-style: italic;
}
.view-btn {
  display: block;
  width: 92px;
  height: 34px;
  border: 0;
  border-radius: 4px;
  background: #0d6efd;
  color: #fff;
  font-size: 14px;
}
.inner-scroll {
  position: absolute;
  right: 0;
  top: 0;
  bottom: 0;
  width: 9px;
  border-radius: 4px 4px 0 0;
  background: #6272bf;
}
.page-scroll {
  position: absolute;
  z-index: 3;
  right: 0;
  top: 5px;
  width: 9px;
  height: 480px;
  border-radius: 5px;
  background: #6272bf;
}

/* taskbar */
.taskbar {
  display: flex;
  align-items: center;
  height: 40px;
  background: #1a1a1a;
  color: #eee;
  flex: none;
}
.start {
  display: flex;
  align-items: center;
  justify-content: center;
  width: 48px;
  height: 40px;
  flex: none;
}
.search {
  position: relative;
  display: flex;
  align-items: center;
  gap: 11px;
  width: 288px;
  height: 40px;
  padding-left: 12px;
  background: #333;
  border: 1px solid #5a5a5a;
  color: #ddd;
  font-size: 13.8px;
  overflow: hidden;
  flex: none;
}
.dna {
  position: absolute;
  right: 0;
  top: 0;
}
.task-view {
  display: flex;
  align-items: center;
  justify-content: center;
  width: 48px;
  flex: none;
}
.task-apps {
  display: flex;
  margin-left: 4.5px;
}
.app {
  position: relative;
  display: flex;
  align-items: center;
  justify-content: center;
  width: 47px;
  height: 40px;
  flex: none;
}
.app-open::after, .app-active::after {
  content: "";
  position: absolute;
  left: 4px;
  right: 4px;
  bottom: 0;
  height: 2px;
  background: #76b9ed;
}
.app-active {
  background: #4a4a4a;
}
.app-active::after {
  left: 0;
  right: 0;
}
.app-ico {
  width: 24px;
  height: 24px;
}
.tray {
  display: flex;
  align-items: center;
  margin-left: 26px;
  font-size: 13px;
}
.temp {
  margin-left: 9px;
}
.tray-up {
  margin: 0 10px 0 27px;
}
.tray-ico {
  margin-right: 8px;
}
.clock {
  margin-left: -3px;
  width: 62px;
  font-size: 12px;
  line-height: 19px;
  text-align: center;
}
.notif {
  position: relative;
  margin-left: 14px;
}
.notif-count {
  position: absolute;
  left: 7px;
  top: 6px;
  width: 20px;
  height: 20px;
  border: 1px solid #aaa;
  border-radius: 50%;
  background: #333;
  color: #fff;
  font-size: 11px;
  font-weight: 700;
  line-height: 18px;
  text-align: center;
}
```
